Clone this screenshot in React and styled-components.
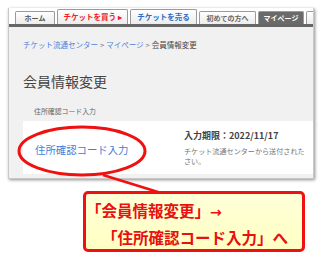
import React from 'react';
import styled, { createGlobalStyle } from 'styled-components';

const GlobalStyle = createGlobalStyle`
  html, body {
    margin: 0;
    padding: 0;
    background: #ffffff;
  }
  body {
    font-family: "Noto Sans CJK JP", "Noto Sans", sans-serif;
  }
`;

const Page = styled.div`
  position: relative;
  width: 320px;
  height: 260px;
  overflow: hidden;
  background: #ffffff;
`;

const Frame = styled.div`
  margin: 8px 0 0 8px;
  width: 304px;
  height: 170px;
  border: 1px solid #c8c8c8;
  border-top: none;
  box-shadow: 1px 1px 3px rgba(0, 0, 0, 0.45);
  display: flex;
  flex-direction: column;
  overflow: hidden;
  background: #ffffff;
`;

const TabBar = styled.div`
  display: flex;
  align-items: flex-end;
  gap: 2px;
  padding: 1px 0 0 6px;
  height: 15px;
  border-bottom: 3px solid #666666;
`;

const Tab = styled.div`
  flex: none;
  width: ${p => p.$w}px;
  height: ${p => (p.$tall ? 15 : 13)}px;
  box-sizing: border-box;
  border: 1px solid #9a9a9a;
  border-bottom: none;
  border-radius: 2px 2px 0 0;
  background: ${p => (p.$dark ? '#6a6a6a' : 'linear-gradient(#ffffff, #ececec)')};
  color: ${p => p.$color || '#555'};
  font-size: ${p => p.$fs || 7}px;
  font-weight: bold;
  display: flex;
  align-items: center;
  justify-content: center;
  white-space: nowrap;
  line-height: 1;
`;

const Content = styled.div`
  flex: 1;
  background: #f1f1f1;
  padding: 12px 0 0 14px;
  display: flex;
  flex-direction: column;
`;

const Breadcrumb = styled.div`
  font-size: 7.5px;
  line-height: 11px;
  color: #444;
  white-space: nowrap;
`;

const Crumb = styled.span`
  color: #4f82dc;
`;

const Sep = styled.span`
  color: #777;
  margin: 0 2px;
`;

const Title = styled.h1`
  margin: 22px 0 0 0;
  font-size: 14px;
  line-height: 18px;
  font-weight: normal;
  color: #444;
`;

const Label = styled.div`
  margin: 17px 0 0 11px;
  font-size: 6.9px;
  line-height: 9px;
  color: #666;
`;

const Card = styled.div`
  margin-top: 5px;
  height: 53px;
  background: #ffffff;
  display: flex;
  padding-left: 12px;
`;

const LinkCol = styled.div`
  flex: none;
  width: 149px;
  display: flex;
  align-items: center;
  padding-top: 3px;
`;

const CodeLink = styled.a`
  font-size: 10.4px;
  color: #3f80d8;
  text-decoration: none;
  white-space: nowrap;
`;

const InfoCol = styled.div`
  flex: 1;
  min-width: 0;
  padding-top: 9px;
  white-space: nowrap;
`;

const Deadline = styled.div`
  font-size: 9px;
  line-height: 12px;
  font-weight: bold;
  color: #444;
`;

const Note = styled.div`
  margin-top: 4px;
  font-size: 7.1px;
  line-height: 10px;
  color: #777;
`;

const Marks = styled.svg`
  position: absolute;
  left: 0;
  top: 0;
  pointer-events: none;
`;

const Callout = styled.div`
  position: absolute;
  left: 83px;
  top: 191px;
  width: 222px;
  height: 61px;
  box-sizing: border-box;
  border: 3px solid #f01010;
  border-radius: 5px;
  background: linear-gradient(#ffffd8, #ffffc4);
  padding: 4px 0 0 0;
`;

const CalloutLine = styled.div`
  font-size: 15.5px;
  line-height: 25px;
  font-weight: bold;
  color: #e81010;
  white-space: nowrap;
  padding-left: ${p => p.$indent || 0}px;
`;

const Arrow = styled.span`
  font-family: "DejaVu Sans", sans-serif;
  font-size: 14px;
`;

export default function App() {
  return (
    <Page>
      <GlobalStyle />
      <Frame>
        <TabBar>
          <Tab $w={40}>ホーム</Tab>
          <Tab $w={71} $tall $color="#ee2222" $fs={7.5}>チケットを買う ▸</Tab>
          <Tab $w={67} $tall $color="#2a6cc8" $fs={7.5}>チケットを売る</Tab>
          <Tab $w={57} $color="#666">初めての方へ</Tab>
          <Tab $w={46} $dark $color="#ffffff">マイページ</Tab>
          <Tab $w={12} />
        </TabBar>
        <Content>
          <Breadcrumb>
            <Crumb>チケット流通センター</Crumb>
            <Sep>&gt;</Sep>
            <Crumb>マイページ</Crumb>
            <Sep>&gt;</Sep>
            会員情報変更
          </Breadcrumb>
          <Title>会員情報変更</Title>
          <Label>住所確認コード入力</Label>
          <Card>
            <LinkCol>
              <CodeLink href="#">住所確認コード入力</CodeLink>
            </LinkCol>
            <InfoCol>
              <Deadline>入力期限：2022/11/17</Deadline>
              <Note>
                チケット流通センターから送付された
                <br />
                さい。
              </Note>
            </InfoCol>
          </Card>
        </Content>
      </Frame>

      <Marks width="320" height="260" viewBox="0 0 320 260">
        <ellipse cx="82" cy="151" rx="63" ry="24" fill="none" stroke="#f01010" strokeWidth="3" />
        <line x1="103" y1="175" x2="158" y2="192" stroke="#f01010" strokeWidth="2.5" />
      </Marks>

      <Callout>
        <CalloutLine>「会員情報変更」<Arrow>→</Arrow></CalloutLine>
        <CalloutLine $indent={16}>「住所確認コード入力」へ</CalloutLine>
      </Callout>
    </Page>
  );
}
